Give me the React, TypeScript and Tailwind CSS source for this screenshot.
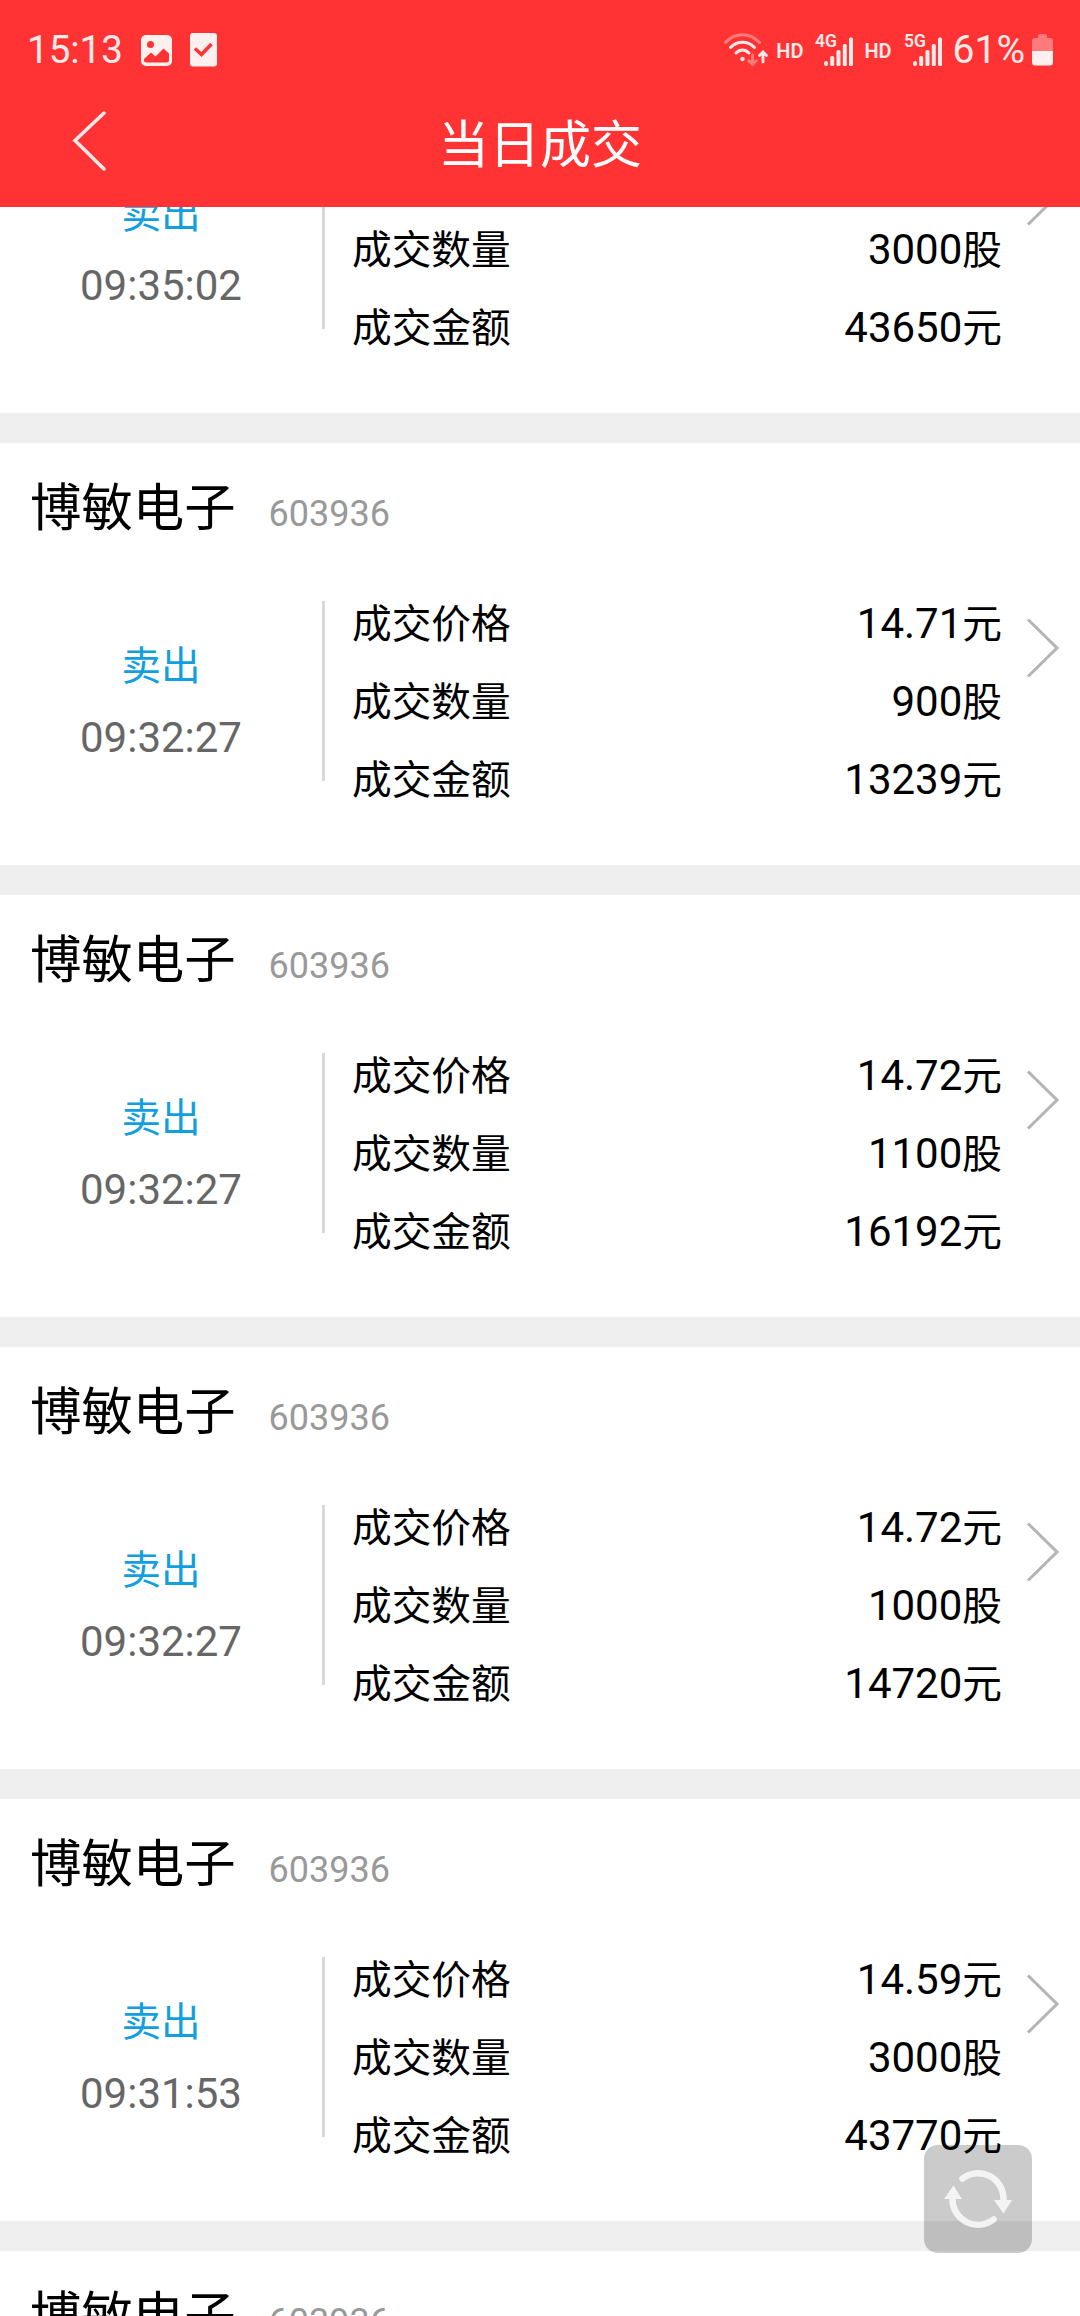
interface Deal {
  name?: string;
  code?: string;
  time: string;
  price?: string;
  quantity: string;
  amount: string;
}

const DEALS: Deal[] = [
  { time: "09:35:02", quantity: "3000", amount: "43650" },
  { name: "博敏电子", code: "603936", time: "09:32:27", price: "14.71", quantity: "900", amount: "13239" },
  { name: "博敏电子", code: "603936", time: "09:32:27", price: "14.72", quantity: "1100", amount: "16192" },
  { name: "博敏电子", code: "603936", time: "09:32:27", price: "14.72", quantity: "1000", amount: "14720" },
  { name: "博敏电子", code: "603936", time: "09:31:53", price: "14.59", quantity: "3000", amount: "43770" },
];

function Signal({ label }: { label: string }) {
  return (
    <svg width="39" height="36" viewBox="0 0 39 36" fill="currentColor">
      <text x="0" y="15" fontSize="18" fontWeight="600" textLength="22" lengthAdjust="spacingAndGlyphs">
        {label}
      </text>
      <rect x="9" y="29" width="4" height="5" rx="2" />
      <rect x="15.2" y="24" width="4" height="10" rx="1.5" />
      <rect x="21.5" y="18" width="4" height="16" rx="1.5" />
      <rect x="27.8" y="12" width="4" height="22" rx="1.5" />
      <rect x="34" y="5.5" width="4" height="28.5" rx="1.5" />
    </svg>
  );
}

function Wifi() {
  return (
    <svg width="44" height="34" viewBox="0 0 44 34" fill="none" stroke="currentColor" strokeWidth="3" strokeLinecap="round">
      <path d="M1.5 9.5C11 -1 26 -1 35.5 9.5" opacity="0.4" />
      <path d="M6.5 14.5C13 7.5 24 7.5 30.5 14.5" />
      <path d="M12 20C16 16 21 16 25 20" />
      <circle cx="18.5" cy="26" r="2.2" fill="currentColor" stroke="none" />
      <path d="M28.5 22V31M24.8 27.8L28.5 31.5L32.2 27.8" opacity="0.4" />
      <path d="M39 29V20M35.5 22.5L39 19L42.5 22.5" strokeWidth="2.8" />
    </svg>
  );
}

function StatusBar() {
  return (
    <div className="flex h-[100px] items-center pl-[27px] pr-[26px] text-[#ffe9e9]">
      <span className="text-[38.5px] leading-none">15:13</span>
      <svg className="ml-[18px]" width="31" height="31" viewBox="0 0 31 31">
        <rect width="31" height="31" rx="5" fill="#fff0f0" />
        <circle cx="9.5" cy="9.5" r="3.5" fill="#f33" />
        <path d="M3 24L10 17.5L14.5 21.5L22.5 13.5L28 18.5V25Q28 27.5 25.5 27.5H5.5Q3 27.5 3 25Z" fill="#f33" />
      </svg>
      <svg className="ml-[18px]" width="27" height="34" viewBox="0 0 27 34">
        <rect width="27" height="33.5" rx="3" fill="#fff0f0" />
        <path d="M5 15.5L11.5 21.5L21.5 11" fill="none" stroke="#f33" strokeWidth="3.5" />
      </svg>

      <div className="ml-auto flex items-center">
        <Wifi />
        <span className="ml-[8px] pt-px text-[20px] leading-none font-semibold">HD</span>
        <span className="ml-[12px]">
          <Signal label="4G" />
        </span>
        <span className="ml-[10px] pt-px text-[20px] leading-none font-semibold">HD</span>
        <span className="ml-[12px]">
          <Signal label="5G" />
        </span>
        <span className="ml-[10px] text-[39px] leading-none">61%</span>
        <svg className="ml-[7px]" width="22" height="32" viewBox="0 0 22 32">
          <path d="M6 5V2Q6 0 8 0H13Q15 0 15 2V4H18Q21 4 21 7V17H0V7Q0 4 3 4H6Z" fill="#ff7a7a" />
          <path d="M0 17H21V28Q21 31.5 18 31.5H3Q0 31.5 0 28Z" fill="#fff0f0" />
        </svg>
      </div>
    </div>
  );
}

function Row({ label, value, unit }: { label: string; value?: string; unit: string }) {
  return (
    <div className="flex h-[78px] items-baseline justify-between leading-[80px]">
      {value && (
        <>
          <span className="text-[39.7px]">{label}</span>
          <span className="text-[42px]">
            {value}
            <span className="text-[39.7px]">{unit}</span>
          </span>
        </>
      )}
    </div>
  );
}

function DealCard({ deal }: { deal: Deal }) {
  return (
    <div className="h-[452px] shrink-0 border-b-[30px] border-[#efefef] bg-white">
      <div className="flex h-[141px] items-baseline pl-[30px] leading-[132px]">
        <span className="text-[51.4px]">{deal.name}</span>
        <span className="ml-[33px] text-[36px] text-[#999]">{deal.code}</span>
      </div>
      <div className="flex">
        <div className="mt-[17px] flex h-[180px] w-[325px] flex-col items-center border-r-[3px] border-[#d8d8d8] pt-[29px]">
          <span className="text-[39.6px] leading-[73px] text-[#129fe0]">卖出</span>
          <span className="text-[42px] leading-[70px] text-[#666]">{deal.time}</span>
        </div>
        <div className="ml-[27px] w-[650px]">
          <Row label="成交价格" value={deal.price} unit="元" />
          <Row label="成交数量" value={deal.quantity} unit="股" />
          <Row label="成交金额" value={deal.amount} unit="元" />
        </div>
        <svg className="mt-[34px] ml-[24px]" width="34" height="60" viewBox="0 0 34 60" fill="none" stroke="#b4b4b4" strokeWidth="3">
          <path d="M2 1.5L31 30L2 58.5" />
        </svg>
      </div>
    </div>
  );
}

export default function App() {
  return (
    <div className="relative flex h-[2316px] w-[1080px] flex-col overflow-hidden bg-white font-[Roboto,'Noto_Sans_CJK_SC',sans-serif] text-black">
      <header className="z-10 h-[207px] shrink-0 bg-[#ff3333]">
        <StatusBar />
        <div className="flex h-[82px] items-center text-white">
          <svg className="ml-[72px]" width="34" height="60" viewBox="0 0 34 60" fill="none" stroke="#ffe9e9" strokeWidth="3.5" strokeLinecap="round">
            <path d="M32 2L3 29.5L32 58" />
          </svg>
          <h1 className="mr-[106px] flex-1 pt-[8px] text-center text-[51px] leading-none">当日成交</h1>
        </div>
      </header>

      <main className="-mt-[216px] flex flex-col">
        {DEALS.map((deal, i) => (
          <DealCard key={i} deal={deal} />
        ))}
        <div className="flex items-baseline pl-[30px] leading-[132px]">
          <span className="text-[51.4px]">博敏电子</span>
          <span className="ml-[33px] text-[36px] text-[#999]">603936</span>
        </div>
      </main>

      <button className="absolute top-[2145px] left-[924px] z-20 flex h-[108px] w-[108px] items-center justify-center rounded-[14px] bg-[#0a0a0a]/21">
        <svg width="68" height="60" viewBox="0 0 68 60" fill="none" stroke="#fff" strokeWidth="6.5" strokeLinecap="round" opacity="0.8">
          <path d="M18.5 9.5A25.5 25.5 0 0 1 59.5 30" />
          <path d="M49.5 50.5A25.5 25.5 0 0 1 8.5 30" />
          <path d="M50 31H68L59.5 44.5Z" fill="#fff" stroke="none" />
          <path d="M0 30H18L9.5 16.5Z" fill="#fff" stroke="none" />
        </svg>
      </button>
    </div>
  );
}
